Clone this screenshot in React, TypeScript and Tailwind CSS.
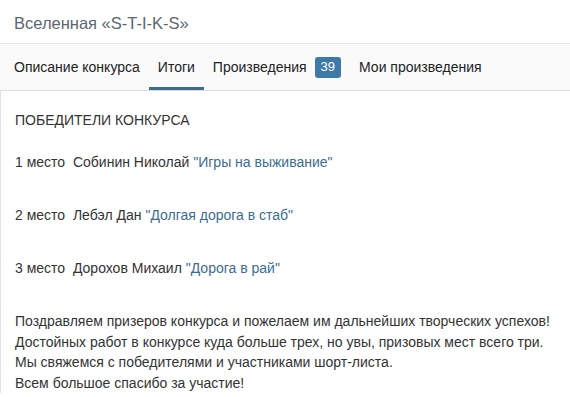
export default function App() {
  const winners = [
    { place: "1 место", name: "Собинин Николай", work: "Игры на выживание" },
    { place: "2 место", name: "Лебэл Дан", work: "Долгая дорога в стаб" },
    { place: "3 место", name: "Дорохов Михаил", work: "Дорога в рай" },
  ];

  return (
    <div className="w-[570px] h-[397px] overflow-hidden bg-white text-[#333] font-['Liberation_Sans',Arial,sans-serif]">
      {/* Header */}
      <div className="h-[44px] border-b border-[#e6e6e6] px-[14px] pt-[3px] flex items-center">
        <h1 className="text-[16.5px] text-[#5b6670] font-normal">Вселенная «S-T-I-K-S»</h1>
      </div>

      {/* Tabs */}
      <div className="h-[47px] bg-[#fafafa] border-b border-[#dcdcdc] flex pl-[5px] text-[14px] text-[#222]">
        <div className="px-[9px] flex items-center">Описание конкурса</div>
        <div className="px-[9px] flex items-center border-b-[3px] border-[#3e6a8c] pt-[3px]">Итоги</div>
        <div className="px-[9px] flex items-center gap-[8px]">
          Произведения
          <span className="bg-[#3f7aa6] text-white text-[13px] rounded-[3px] px-[6px] h-[21px] flex items-center">39</span>
        </div>
        <div className="px-[9px] flex items-center">Мои произведения</div>
      </div>

      {/* Content */}
      <div className="border-l border-[#e2e2e2] px-[14px] pt-[19px] text-[14px]">
        <div className="h-[20px] flex items-center">ПОБЕДИТЕЛИ КОНКУРСА</div>
        <div className="flex flex-col gap-[33px] mt-[22px]">
          {winners.map((w) => (
            <div key={w.place} className="h-[20px] flex items-center whitespace-pre">
              {w.place}
              {"  "}
              {w.name}{" "}
              <a className="text-[#3a6d93]">"{w.work}"</a>
            </div>
          ))}
        </div>
        <div className="mt-[33px] leading-[20.5px]">
          <p>Поздравляем призеров конкурса и пожелаем им дальнейших творческих успехов!</p>
          <p>Достойных работ в конкурсе куда больше трех, но увы, призовых мест всего три.</p>
          <p>Мы свяжемся с победителями и участниками шорт-листа.</p>
          <p>Всем большое спасибо за участие!</p>
        </div>
      </div>
    </div>
  );
}
